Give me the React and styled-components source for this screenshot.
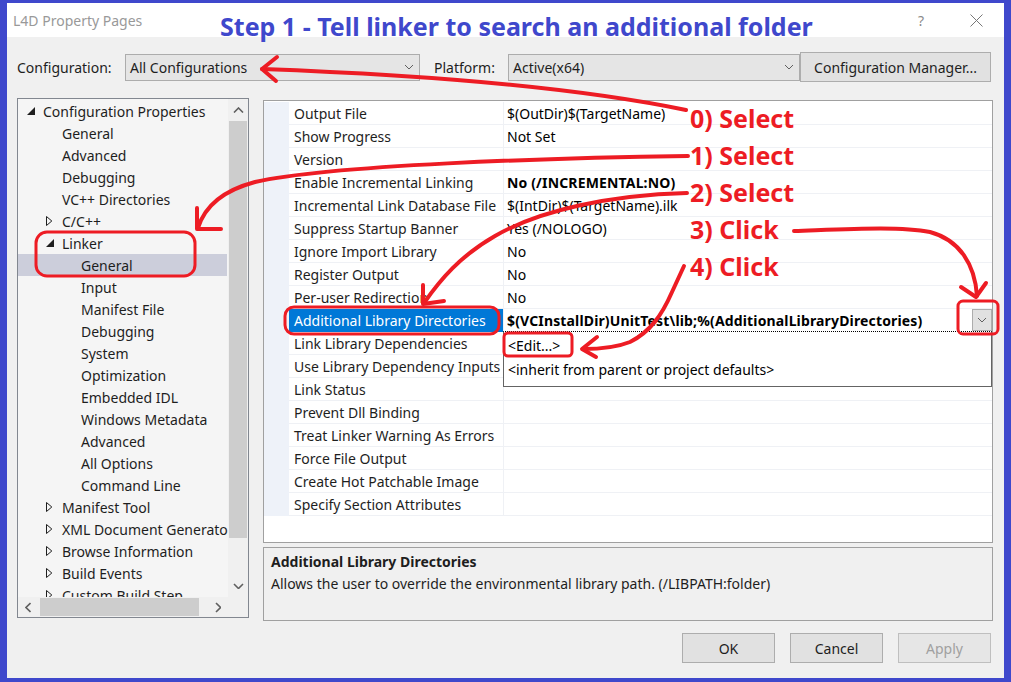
import React from 'react';
import styled, { createGlobalStyle } from 'styled-components';

const GlobalStyle = createGlobalStyle`
  html, body { margin: 0; padding: 0; background: #3f48cc; }
  body { font-family: "Noto Sans", "Open Sans", sans-serif; color: #1e1e1e; }
  * { box-sizing: border-box; }
`;

const Frame = styled.div`
  position: relative;
  width: 1011px;
  height: 682px;
  padding: 3px 7px 4px 7px;
  background: #3f48cc;
  overflow: hidden;
`;

const Window = styled.div`
  display: flex;
  flex-direction: column;
  height: 100%;
  background: #f0f0f0;
`;

const TitleBar = styled.div`
  position: relative;
  flex: none;
  height: 34px;
  display: flex;
  align-items: center;
  padding: 0 21px 0 6px;
  background: #fff;
`;

const TitleText = styled.span`
  font-size: 14px;
  color: #999;
`;

const TitleButtons = styled.div`
  margin-left: auto;
  display: flex;
  align-items: center;
  gap: 46px;
  color: #8a8a8a;
  font-size: 14px;
`;

const Heading = styled.div`
  position: absolute;
  left: 213px;
  top: 6px;
  font-size: 25px;
  line-height: 34px;
  font-weight: 700;
  color: #3f48cc;
  white-space: nowrap;
  z-index: 5;
`;

const Body = styled.div`
  flex: 1;
  display: flex;
  flex-direction: column;
  padding: 15px 13px 0 10px;
`;

const ConfigRow = styled.div`
  display: flex;
  align-items: center;
  height: 30px;
`;

const FieldLabel = styled.span`
  flex: none;
  width: ${p => p.$w}px;
  margin-left: ${p => p.$ml || 0}px;
  font-size: 14px;
`;

const Select = styled.div`
  flex: none;
  width: ${p => p.$w}px;
  height: 27px;
  display: flex;
  align-items: center;
  justify-content: space-between;
  padding: 0 5px 0 4px;
  border: 1px solid #acacac;
  background: #e5e5e5;
  font-size: 14px;
`;

const ManagerButton = styled.div`
  flex: none;
  width: 191px;
  height: 30px;
  display: flex;
  align-items: center;
  justify-content: center;
  border: 1px solid #adadad;
  background: #e1e1e1;
  font-size: 14px;
`;

const Main = styled.div`
  display: grid;
  grid-template-columns: 232px 730px;
  column-gap: 14px;
  margin-top: 16px;
  height: 523px;
`;

const Tree = styled.div`
  height: 520px;
  display: grid;
  grid-template-columns: 210px 20px;
  grid-template-rows: 498px 20px;
  border: 1px solid #828790;
  background: #f5f5f5;
`;

const TreeList = styled.div`
  overflow: hidden;
  padding-top: 1px;
`;

const TreeRow = styled.div`
  height: 22px;
  display: flex;
  align-items: center;
  padding-left: ${p => 6 + p.$level * 19}px;
  margin-right: 1px;
  white-space: nowrap;
  font-size: 14px;
  background: ${p => (p.$selected ? '#cccedb' : 'transparent')};
`;

const Expander = styled.span`
  flex: none;
  width: 19px;
  height: 22px;
  display: flex;
  align-items: center;
  padding-left: 3px;
`;

const VScroll = styled.div`
  display: flex;
  flex-direction: column;
  align-items: center;
  background: #f0f0f0;
`;

const HScroll = styled.div`
  display: flex;
  align-items: center;
  background: #f0f0f0;
`;

const Corner = styled.div`
  background: #f0f0f0;
`;

const Spacer = styled.div`
  flex: 1;
`;

const ArrowCell = styled.div`
  flex: none;
  width: ${p => p.$w || 20}px;
  height: ${p => p.$h || 20}px;
  display: flex;
  align-items: center;
  justify-content: center;
`;

const VThumb = styled.div`
  width: 18px;
  height: 417px;
  background: #cdcdcd;
`;

const HThumb = styled.div`
  width: 159px;
  height: 18px;
  margin-left: 2px;
  background: #cdcdcd;
`;

const RightColumn = styled.div`
  display: flex;
  flex-direction: column;
  padding-top: 2px;
  gap: 4px;
`;

const Grid = styled.div`
  height: 443px;
  border: 1px solid #a0a0a0;
  background: #fff;
  padding-top: 1px;
`;

const PropRow = styled.div`
  display: grid;
  grid-template-columns: 25px 215px 1fr;
  height: 23px;
  font-size: 14px;
`;

const Gutter = styled.div`
  background: #eef2f9;
`;

const NameCell = styled.div`
  display: flex;
  align-items: center;
  padding-left: 5px;
  overflow: hidden;
  white-space: nowrap;
  border-bottom: 1px solid ${p => (p.$selected ? '#0078d7' : '#eff1f5')};
  border-right: 1px solid #eff1f5;
  background: ${p => (p.$selected ? '#0078d7' : '#fff')};
  color: ${p => (p.$selected ? '#fff' : '#1e1e1e')};
`;

const ValueCell = styled.div`
  position: relative;
  display: flex;
  align-items: center;
  padding-left: 3px;
  white-space: nowrap;
  border-bottom: 1px solid #eff1f5;
  font-weight: ${p => (p.$bold ? 700 : 400)};
  letter-spacing: ${p => (p.$bold ? '0.15px' : '0')};
  color: #000;
`;

const DropButton = styled.div`
  margin-left: auto;
  width: 20px;
  height: 22px;
  display: flex;
  align-items: center;
  justify-content: center;
  border: 1px solid #adadad;
  background: #e1e1e1;
`;

const DropList = styled.div`
  position: absolute;
  left: -1px;
  right: 0;
  top: 100%;
  height: 56px;
  padding-top: 1px;
  border: 1px solid #646464;
  border-top: 1px dotted #000;
  background: #fff;
  font-weight: 400;
  letter-spacing: 0;
  z-index: 2;
`;

const DropItem = styled.div`
  height: 24px;
  display: flex;
  align-items: center;
  padding-left: 4px;
  font-size: 14px;
  color: #000;
`;

const Description = styled.div`
  height: 74px;
  padding: 3px 7px;
  border: 1px solid #a0a0a0;
  background: #f0f0f0;
  font-size: 14px;
  line-height: 22px;
`;

const DescTitle = styled.div`
  font-weight: 700;
`;

const Footer = styled.div`
  display: flex;
  justify-content: flex-end;
  gap: 15px;
  margin-top: 12px;
`;

const DialogButton = styled.div`
  width: 93px;
  height: 30px;
  display: flex;
  align-items: center;
  justify-content: center;
  border: 1px solid ${p => (p.$disabled ? '#bfbfbf' : '#adadad')};
  background: ${p => (p.$disabled ? '#e6e6e6' : '#e1e1e1')};
  color: ${p => (p.$disabled ? '#a0a0a0' : '#1e1e1e')};
  font-size: 14px;
`;

const Overlay = styled.svg`
  position: absolute;
  left: 0;
  top: 0;
  width: 1011px;
  height: 682px;
  pointer-events: none;
  z-index: 10;
`;

const Steps = styled.div`
  position: absolute;
  left: 690px;
  top: 100px;
  display: flex;
  flex-direction: column;
  z-index: 11;
`;

const Step = styled.div`
  height: 37px;
  line-height: 37px;
  font-size: 25px;
  font-weight: 700;
  color: #ed1c24;
  white-space: nowrap;
`;

const Chevron = ({ dir = 'down', size = 8, color = '#555', w = 1 }) => {
  const pts = {
    down: `0,0 ${size / 2},${size / 2} ${size},0`,
    up: `0,${size / 2} ${size / 2},0 ${size},${size / 2}`,
    left: `${size / 2},0 0,${size / 2} ${size / 2},${size}`,
    right: `0,0 ${size / 2},${size / 2} 0,${size}`,
  }[dir];
  const vw = dir === 'left' || dir === 'right' ? size / 2 : size;
  const vh = dir === 'left' || dir === 'right' ? size : size / 2;
  return (
    <svg width={vw + 2} height={vh + 2} viewBox={`-1 -1 ${vw + 2} ${vh + 2}`}>
      <polyline points={pts} fill="none" stroke={color} strokeWidth={w} />
    </svg>
  );
};

const OpenTri = () => (
  <svg width="9" height="9" viewBox="0 0 9 9">
    <polygon points="8,0 8,8 0,8" fill="#1e1e1e" />
  </svg>
);

const ClosedTri = () => (
  <svg width="7" height="10" viewBox="0 0 7 10">
    <polygon points="0.5,0.5 5.8,5 0.5,9.5" fill="none" stroke="#1e1e1e" strokeWidth="1" />
  </svg>
);

const treeItems = [
  { label: 'Configuration Properties', level: 0, exp: 'open' },
  { label: 'General', level: 1 },
  { label: 'Advanced', level: 1 },
  { label: 'Debugging', level: 1 },
  { label: 'VC++ Directories', level: 1 },
  { label: 'C/C++', level: 1, exp: 'closed' },
  { label: 'Linker', level: 1, exp: 'open' },
  { label: 'General', level: 2, selected: true },
  { label: 'Input', level: 2 },
  { label: 'Manifest File', level: 2 },
  { label: 'Debugging', level: 2 },
  { label: 'System', level: 2 },
  { label: 'Optimization', level: 2 },
  { label: 'Embedded IDL', level: 2 },
  { label: 'Windows Metadata', level: 2 },
  { label: 'Advanced', level: 2 },
  { label: 'All Options', level: 2 },
  { label: 'Command Line', level: 2 },
  { label: 'Manifest Tool', level: 1, exp: 'closed' },
  { label: 'XML Document Generator', level: 1, exp: 'closed' },
  { label: 'Browse Information', level: 1, exp: 'closed' },
  { label: 'Build Events', level: 1, exp: 'closed' },
  { label: 'Custom Build Step', level: 1, exp: 'closed' },
];

const props = [
  { name: 'Output File', value: '$(OutDir)$(TargetName)' },
  { name: 'Show Progress', value: 'Not Set' },
  { name: 'Version', value: '' },
  { name: 'Enable Incremental Linking', value: 'No (/INCREMENTAL:NO)', bold: true },
  { name: 'Incremental Link Database File', value: '$(IntDir)$(TargetName).ilk' },
  { name: 'Suppress Startup Banner', value: 'Yes (/NOLOGO)' },
  { name: 'Ignore Import Library', value: 'No' },
  { name: 'Register Output', value: 'No' },
  { name: 'Per-user Redirection', value: 'No' },
  {
    name: 'Additional Library Directories',
    value: '$(VCInstallDir)UnitTest\\lib;%(AdditionalLibraryDirectories)',
    bold: true,
    selected: true,
  },
  { name: 'Link Library Dependencies', value: '' },
  { name: 'Use Library Dependency Inputs', value: '' },
  { name: 'Link Status', value: '' },
  { name: 'Prevent Dll Binding', value: '' },
  { name: 'Treat Linker Warning As Errors', value: '' },
  { name: 'Force File Output', value: '' },
  { name: 'Create Hot Patchable Image', value: '' },
  { name: 'Specify Section Attributes', value: '' },
];

const Annotations = () => (
  <Overlay viewBox="0 0 1011 682">
    <g fill="none" stroke="#ed1c24" strokeWidth="4" strokeLinecap="round" strokeLinejoin="round">
      <path d="M 262 69 C 400 74, 560 84, 686 110" />
      <path d="M 277 57 L 262 69 L 276 81" />
      <path d="M 688 156 C 550 158, 330 165, 255 182 C 225 190, 205 205, 198 228" />
      <path d="M 197 208 L 197 229 L 221 229" />
      <rect x="36" y="232" width="159" height="44" rx="11" strokeWidth="3" />
      <path d="M 687 193 C 610 195, 540 210, 495 236 C 460 256, 440 280, 424 303" />
      <path d="M 423 285 L 423 304 L 444 301" />
      <rect x="285" y="307" width="214" height="27" rx="9" strokeWidth="3" />
      <path d="M 794 231 C 850 229, 900 226, 930 232 C 960 240, 975 265, 977 296" />
      <path d="M 961 287 L 976 297 L 986 283" />
      <rect x="958" y="301" width="40" height="33" rx="5" strokeWidth="3" />
      <path d="M 684 266 L 672 292 C 662 315, 650 332, 630 342 C 615 348, 600 349, 583 349" />
      <path d="M 597 337 L 582 349 L 596 357" />
      <rect x="504" y="333" width="68" height="23" rx="4" strokeWidth="3" />
    </g>
  </Overlay>
);

export default function App() {
  return (
    <>
      <GlobalStyle />
      <Frame>
        <Window>
          <TitleBar>
            <TitleText>L4D Property Pages</TitleText>
            <Heading>Step 1 - Tell linker to search an additional folder</Heading>
            <TitleButtons>
              <span>?</span>
              <svg width="13" height="13" viewBox="0 0 13 13">
                <path d="M 0.5 0.5 L 12.5 12.5 M 12.5 0.5 L 0.5 12.5" stroke="#777" strokeWidth="1" />
              </svg>
            </TitleButtons>
          </TitleBar>
          <Body>
            <ConfigRow>
              <FieldLabel $w={108}>Configuration:</FieldLabel>
              <Select $w={295}>
                <span>All Configurations</span>
                <Chevron dir="down" size={8} color="#606060" />
              </Select>
              <FieldLabel $w={74} $ml={14}>Platform:</FieldLabel>
              <Select $w={292}>
                <span>Active(x64)</span>
                <Chevron dir="down" size={8} color="#606060" />
              </Select>
              <ManagerButton>Configuration Manager...</ManagerButton>
            </ConfigRow>
            <Main>
              <Tree>
                <TreeList>
                  {treeItems.map((it, i) => (
                    <TreeRow key={i} $level={it.level} $selected={it.selected}>
                      <Expander>
                        {it.exp === 'open' && <OpenTri />}
                        {it.exp === 'closed' && <ClosedTri />}
                      </Expander>
                      {it.label}
                    </TreeRow>
                  ))}
                </TreeList>
                <VScroll>
                  <ArrowCell $h={22}>
                    <Chevron dir="up" size={9} color="#606060" w={1.6} />
                  </ArrowCell>
                  <VThumb />
                  <Spacer />
                  <ArrowCell $h={22}>
                    <Chevron dir="down" size={9} color="#606060" w={1.6} />
                  </ArrowCell>
                </VScroll>
                <HScroll>
                  <ArrowCell $w={20}>
                    <Chevron dir="left" size={9} color="#606060" w={1.6} />
                  </ArrowCell>
                  <HThumb />
                  <Spacer />
                  <ArrowCell $w={20}>
                    <Chevron dir="right" size={9} color="#606060" w={1.6} />
                  </ArrowCell>
                </HScroll>
                <Corner />
              </Tree>
              <RightColumn>
                <Grid>
                  {props.map((p, i) => (
                    <PropRow key={i}>
                      <Gutter />
                      <NameCell $selected={p.selected}>{p.name}</NameCell>
                      <ValueCell $bold={p.bold}>
                        {p.value}
                        {p.selected && (
                          <>
                            <DropButton>
                              <Chevron dir="down" size={8} color="#606060" />
                            </DropButton>
                            <DropList>
                              <DropItem>&lt;Edit...&gt;</DropItem>
                              <DropItem>&lt;inherit from parent or project defaults&gt;</DropItem>
                            </DropList>
                          </>
                        )}
                      </ValueCell>
                    </PropRow>
                  ))}
                </Grid>
                <Description>
                  <DescTitle>Additional Library Directories</DescTitle>
                  <div>Allows the user to override the environmental library path. (/LIBPATH:folder)</div>
                </Description>
              </RightColumn>
            </Main>
            <Footer>
              <DialogButton>OK</DialogButton>
              <DialogButton>Cancel</DialogButton>
              <DialogButton $disabled>Apply</DialogButton>
            </Footer>
          </Body>
        </Window>
        <Steps>
          <Step>0) Select</Step>
          <Step>1) Select</Step>
          <Step>2) Select</Step>
          <Step>3) Click</Step>
          <Step>4) Click</Step>
        </Steps>
        <Annotations />
      </Frame>
    </>
  );
}
